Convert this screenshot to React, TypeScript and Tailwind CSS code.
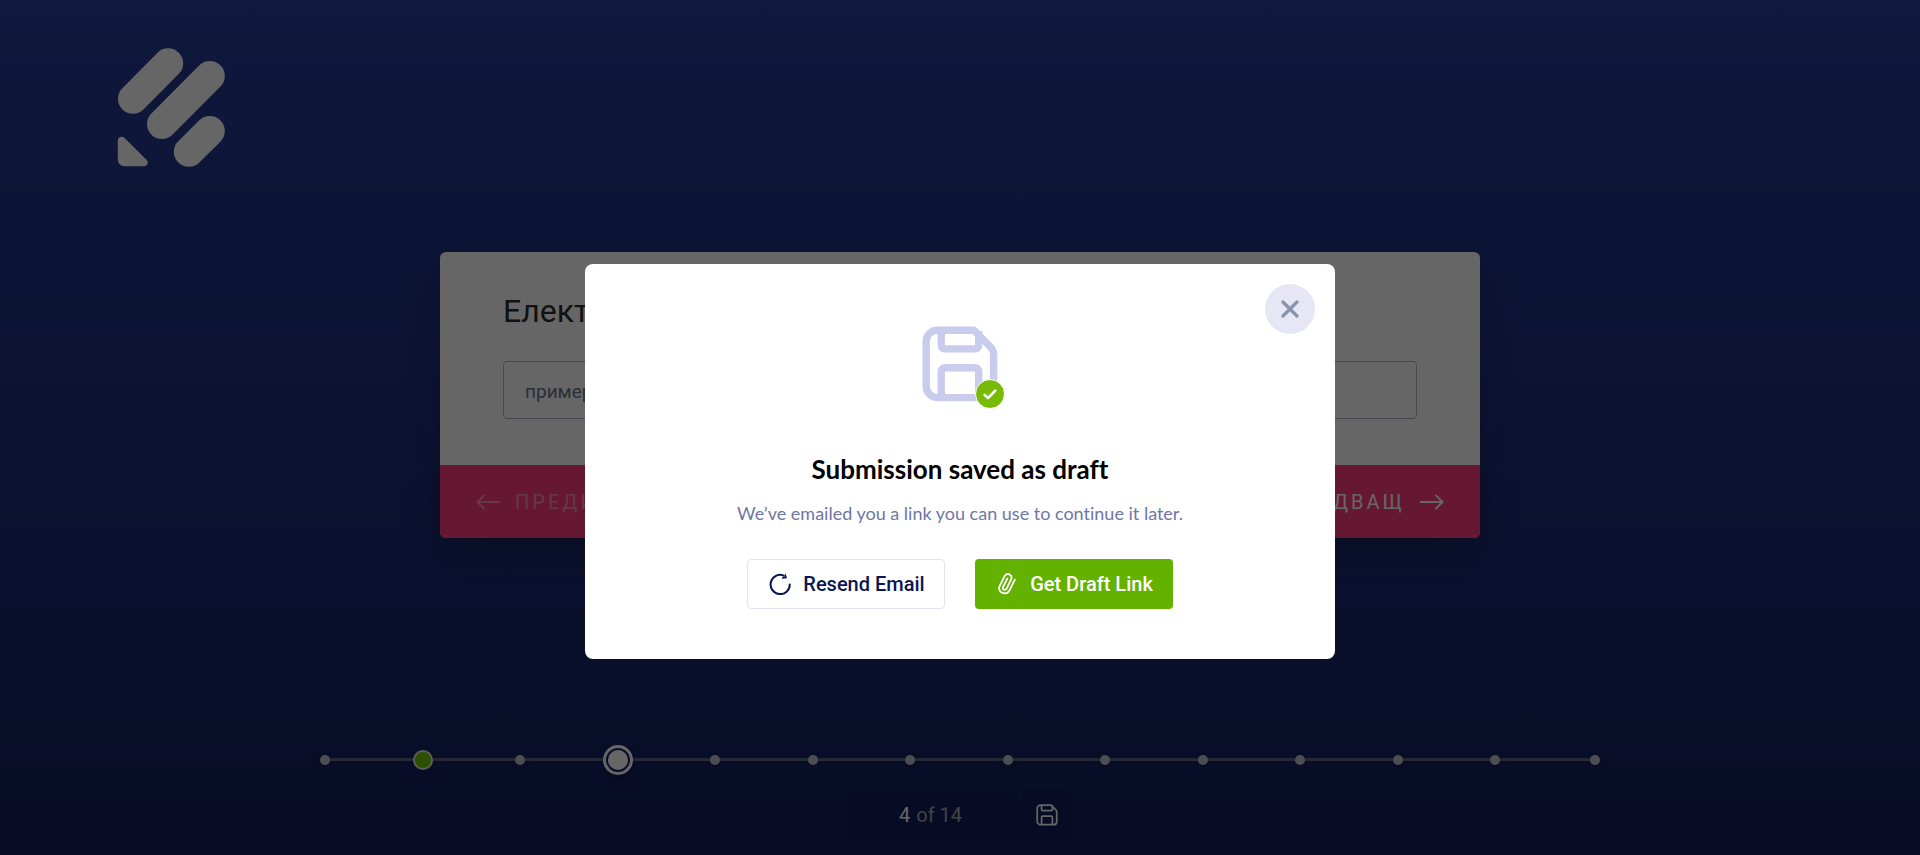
import React from "react";

const STEP_COUNT = 14;
const DONE_STEP = 2;
const CURRENT_STEP = 4;

function Logo() {
  return (
    <svg width="108" height="119" viewBox="0 0 108 119" fill="none" role="img" aria-label="Form logo">
      <g stroke="#fff" strokeWidth="30" strokeLinecap="round">
        <path d="M51.2 15.3 16 50.8" />
        <path d="M92.8 28 45 76" />
        <path d="M92.8 83 71.8 103.8" />
      </g>
      <path
        fill="#fff"
        d="M.8 92.500c0-3.400 4-5 6.500-2.700l22.400 22.200c2.400 2.400.7 6.200-2.600 6.200H7.500c-3.800 0-6.700-3-6.700-6.700z"
      />
    </svg>
  );
}

function SaveIcon({ size, strokeWidth }: { size: number; strokeWidth: number }) {
  return (
    <svg width={size} height={size} viewBox="0 0 76 76" fill="none" stroke="currentColor" strokeWidth={strokeWidth} aria-hidden="true">
      <path
        strokeLinejoin="round"
        d="M15.500 4.200h36.300l16.300 16.300c2.300 2.300 3.500 4.600 3.500 7.800v31.900c0 6.300-5 11.400-11.300 11.400H15.500C9.200 71.600 4.200 66.500 4.200 60.200V15.500C4.200 9.200 9.200 4.200 15.500 4.200Z"
      />
      <path d="M19.200 4.500v14.500c0 2.200 1.700 3.900 3.900 3.900h29.700c2.200 0 3.900-1.700 3.900-3.900V5" />
      <path d="M19.200 71.500V45.700c0-2.200 1.700-3.900 3.900-3.900h29.700c2.200 0 3.900 1.700 3.900 3.900v25.800" />
    </svg>
  );
}

function Arrow({ flipped = false }: { flipped?: boolean }) {
  return (
    <svg
      width="24"
      height="16"
      viewBox="0 0 24 16"
      fill="none"
      stroke="currentColor"
      strokeWidth="2"
      aria-hidden="true"
      className={flipped ? "rotate-180" : undefined}
    >
      <path d="M0 8h22.500M15.500 1l7 7-7 7" />
    </svg>
  );
}

function StepDot({ step }: { step: number }) {
  if (step === CURRENT_STEP) {
    return (
      <span className="flex size-[30px] shrink-0 items-center justify-center rounded-full border-3 border-white bg-[#1a2263] shadow-[0_6px_14px_rgba(0,0,0,0.3)]">
        <span className="size-5 rounded-full bg-white" />
      </span>
    );
  }
  if (step === DONE_STEP) {
    return <span className="size-5 shrink-0 rounded-full border-2 border-[#e6e6e6] bg-[#70c800] shadow-[0_6px_14px_rgba(0,0,0,0.2)]" />;
  }
  return <span className="size-[10px] shrink-0 rounded-full bg-[#c4c4cc] shadow-[0_4px_8px_rgba(0,0,0,0.2)]" />;
}

function Progress() {
  const steps = Array.from({ length: STEP_COUNT }, (_, i) => i + 1);
  return (
    <footer className="mt-auto flex flex-col items-center gap-[14px] pb-[14px]">
      <div className="relative w-2/3">
        <div className="absolute inset-x-1 top-[13px] h-[3px] bg-[#5f6588]" />
        <ol className="relative flex h-[30px] items-center">
          {steps.map((step) => (
            <li key={step} className="flex-1 last:ml-[2px] last:flex-none">
              <span className="flex w-[10px] items-center justify-center">
                <StepDot step={step} />
              </span>
            </li>
          ))}
        </ol>
      </div>
      <div className="flex items-center gap-[7px] text-xl">
        <p className="flex h-[51px] w-[167px] items-center justify-center gap-[6px] rounded-md bg-black/10 text-[#a9a9ae]">
          <span className="text-white">{CURRENT_STEP}</span>
          <span>of {STEP_COUNT}</span>
        </p>
        <button type="button" aria-label="Save" className="flex size-[52px] items-center justify-center rounded-md bg-black/10 text-white">
          <SaveIcon size={22} strokeWidth={6} />
        </button>
      </div>
    </footer>
  );
}

function QuestionCard() {
  return (
    <main className="mx-auto mt-[85px] w-full max-w-[1040px] overflow-hidden rounded-md bg-white shadow-[0_10px_40px_rgba(0,0,0,0.2)]">
      <div className="px-[63px] pt-[39px] pb-[46px]">
        <label htmlFor="email" className="block text-[32px] leading-10 text-[#2c2c2c]">
          Електронна поща
        </label>
        <input
          id="email"
          type="email"
          placeholder="пример@пример.com"
          className="mt-[30px] block h-[58px] w-full rounded-sm border border-[#b0b5c8] px-[21px] pt-[2px] text-[19px] placeholder:text-[#6b7390]"
        />
      </div>
      <div className="flex h-[73px] items-center justify-between bg-[#ff3c7d] px-9 pt-px text-xl tracking-[3px] text-white">
        <button type="button" className="flex items-center gap-[15px] opacity-40">
          <Arrow flipped />
          ПРЕДИШЕН
        </button>
        <button type="button" className="flex items-center gap-[15px]">
          СЛЕДВАЩ
          <Arrow />
        </button>
      </div>
    </main>
  );
}

function DraftDialog() {
  return (
    <div className="fixed inset-0 flex items-center justify-center bg-black/60 pt-[68px]">
      <section
        role="dialog"
        aria-modal="true"
        aria-labelledby="draft-title"
        className="relative flex w-full max-w-[750px] flex-col items-center rounded-lg bg-white pt-[62px] pb-[50px]"
      >
        <button
          type="button"
          aria-label="Close"
          className="absolute top-5 right-5 flex size-[50px] items-center justify-center rounded-full bg-[#e6e6f5] text-[#8894ab]"
        >
          <svg width="18" height="18" viewBox="0 0 18 18" fill="none" stroke="currentColor" strokeWidth="3.200" strokeLinecap="round" aria-hidden="true">
            <path d="M2 2l14 14M16 2 2 16" />
          </svg>
        </button>

        <div className="relative text-[#c9ccec]">
          <SaveIcon size={76} strokeWidth={7.4} />
          <span className="absolute -right-[7px] -bottom-[7px] flex size-[30px] items-center justify-center rounded-full border border-white bg-[#78bb07]">
            <svg width="14" height="11" viewBox="0 0 14 11" fill="none" stroke="#fff" strokeWidth="2.600" strokeLinecap="round" strokeLinejoin="round" aria-hidden="true">
              <path d="M1.600 5.800 5 9.200 12.300 1.600" />
            </svg>
          </span>
        </div>

        <h2 id="draft-title" className="mt-[49px] font-['Lato',sans-serif] text-[26px] leading-9 font-bold text-black [font-variant-ligatures:none]">
          Submission saved as draft
        </h2>
        <p className="mt-[14px] font-['Lato',sans-serif] text-lg leading-6 text-[#6f76a7] [font-variant-ligatures:none]">
          We’ve emailed you a link you can use to continue it later.
        </p>

        <div className="mt-[34px] flex gap-[30px] text-xl font-medium">
          <button type="button" className="flex h-[50px] w-[198px] items-center justify-center gap-3 rounded border border-[#e3e3f2] pl-[2px] text-[#0a1551]">
            <svg width="22" height="22" viewBox="0 0 22 22" fill="none" aria-hidden="true">
              <path stroke="currentColor" strokeWidth="2" strokeLinecap="round" d="M14.800 2.600A9.600 9.600 0 1 0 20.800 11.400" />
              <path fill="currentColor" d="M16.300-.4 18 5.200 12.800 5.800 13.400 4.100 16 3.200z" />
            </svg>
            Resend Email
          </button>
          <button type="button" className="flex h-[50px] w-[198px] items-center justify-center gap-[14px] rounded bg-[#64b200] pl-[3px] text-white">
            <svg width="18" height="22" viewBox="0 0 18 22" fill="none" stroke="currentColor" strokeWidth="1.800" strokeLinecap="round" aria-hidden="true">
              <path d="M16.800 6.600 11.700 17.200C8.600 23.400-.8 19.600 1.500 13.400L6.600 3.200C8.600-.8 15 1.400 13.200 6.200L8.600 15.600C7.400 18 4 16.600 5 14.200L9.300 5.600" />
            </svg>
            Get Draft Link
          </button>
        </div>
      </section>
    </div>
  );
}

export default function App() {
  return (
    <div className="flex min-h-screen flex-col bg-linear-to-b from-[#263e98] to-[#151f60] font-['Roboto',sans-serif]">
      <header className="pt-12 pl-[117px]">
        <Logo />
      </header>
      <QuestionCard />
      <Progress />
      <DraftDialog />
    </div>
  );
}
